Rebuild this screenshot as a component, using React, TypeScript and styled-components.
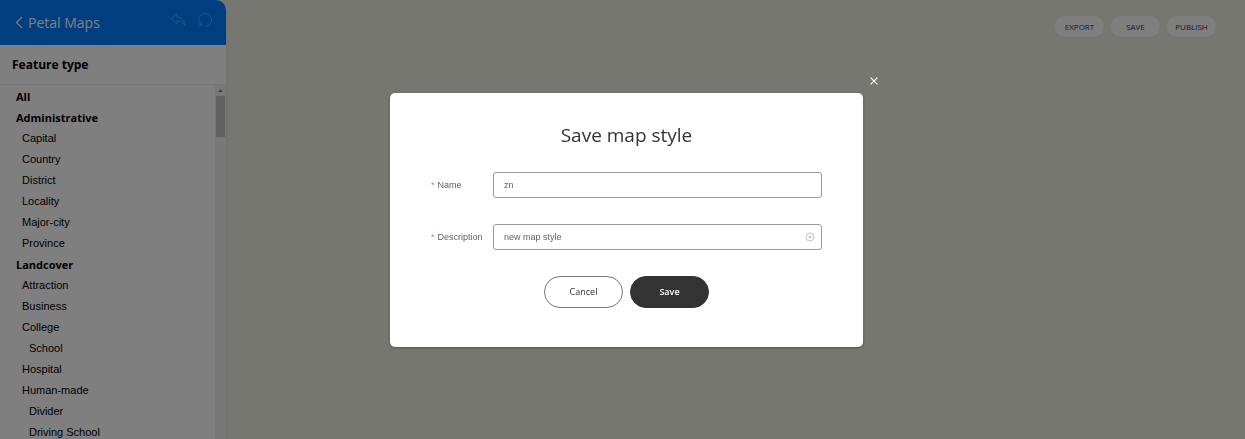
import React, { useState } from "react";
import styled, { createGlobalStyle } from "styled-components";

const ui = `"Open Sans", "Noto Sans", sans-serif`;
const body = `"Liberation Sans", Arial, sans-serif`;

const GlobalStyle = createGlobalStyle`
  *, *::before, *::after { box-sizing: border-box; }
  body { margin: 0; font-family: ${body}; font-size: 12px; color: #000; }
  button, input { font: inherit; }
  button { cursor: pointer; }
  ul { list-style: none; margin: 0; padding: 0; }
`;

const Page = styled.div`
  display: flex;
  height: 100vh;
  overflow: hidden;
  background: #edefe1;
`;

const Sidebar = styled.aside`
  display: flex;
  flex-direction: column;
  width: 226px;
  flex: none;
  background: #fff;
  border-top-right-radius: 10px;
  box-shadow: 1px 0 3px rgba(0, 0, 0, 0.06);
`;

const Brand = styled.header`
  display: flex;
  align-items: center;
  height: 45px;
  flex: none;
  padding: 0 13px 0 14px;
  background: #007dff;
  border-top-right-radius: 10px;
  color: #fff;
`;

const BackLink = styled.a`
  display: flex;
  align-items: center;
  gap: 4px;
  flex: 1;
  color: inherit;
  text-decoration: none;
  font: 14px/20px ${ui};
`;

const HistoryTools = styled.div`
  display: flex;
  gap: 11px;
  padding-bottom: 6px;
`;

const ToolButton = styled.button`
  display: flex;
  padding: 0;
  border: 0;
  background: none;
  color: #5caaff;
`;

const SectionTitle = styled.h2`
  display: flex;
  align-items: center;
  height: 40px;
  flex: none;
  margin: 0;
  padding: 0 12px;
  border-bottom: 1px solid #eee;
  font: 700 12px/20px ${ui};
`;

const ListArea = styled.div`
  display: flex;
  flex: 1;
  min-height: 0;
  overflow: hidden;
`;

const FeatureList = styled.ul`
  flex: 1;
  padding-top: 1px;
`;

const Feature = styled.li<{ $level: number }>`
  height: 21px;
  padding-left: ${(p) => [16, 22, 29][p.$level]}px;
  font: ${(p) => (p.$level === 0 ? `700 11px/21px ${ui}` : `11px/21px ${body}`)};
`;

const ScrollTrack = styled.div`
  display: flex;
  flex-direction: column;
  align-items: center;
  width: 11px;
  background: #f1f1f1;
`;

const ScrollArrow = styled.span`
  height: 11px;
  display: flex;
  align-items: center;
`;

const ScrollThumb = styled.span`
  width: 9px;
  height: 41px;
  background: #c1c1c1;
`;

const MapArea = styled.main`
  flex: 1;
  padding: 16px 29px;
`;

const MapActions = styled.div`
  display: flex;
  justify-content: flex-end;
  gap: 7px;
`;

const MapButton = styled.button`
  width: 49px;
  height: 21px;
  padding: 0;
  border: 0;
  border-radius: 11px;
  background: #fff;
  color: #333;
  font: 8px/21px ${ui};
`;

const Overlay = styled.div`
  position: fixed;
  inset: 0;
  padding: 93px 0 0 8px;
  background: rgba(0, 0, 0, 0.5);
`;

const Dialog = styled.section`
  position: relative;
  width: 90%;
  max-width: 473px;
  margin: 0 auto;
  padding: 28px 41px 39px;
  border-radius: 5px;
  background: #fff;
  box-shadow: 0 1px 3px rgba(0, 0, 0, 0.3);
`;

const CloseButton = styled.button`
  position: absolute;
  top: -17px;
  right: -16px;
  display: flex;
  padding: 0;
  border: 0;
  background: none;
  color: #fff;
`;

const DialogTitle = styled.h1`
  margin: 0 0 23px;
  text-align: center;
  color: #333;
  font: 400 19px/28px ${ui};
`;

const Field = styled.div`
  display: flex;
  align-items: center;
  margin-bottom: 26px;
`;

const Label = styled.label`
  width: 62px;
  flex: none;
  color: #606266;
  font-size: 9px;
`;

const Required = styled.span`
  margin-right: 3px;
  color: #f56c6c;
`;

const InputBox = styled.div`
  display: flex;
  align-items: center;
  flex: 1;
  height: 26px;
  padding: 0 6px 0 10px;
  border: 1px solid #999;
  border-radius: 3px;
`;

const TextInput = styled.input`
  flex: 1;
  min-width: 0;
  padding: 0;
  border: 0;
  outline: 0;
  background: none;
  color: #606266;
  font-size: 9px;
`;

const ClearButton = styled.button`
  display: flex;
  padding: 0;
  border: 0;
  background: none;
  color: #c0c4cc;
`;

const DialogActions = styled.div`
  display: flex;
  justify-content: center;
  gap: 7px;
`;

const PillButton = styled.button<{ $primary?: boolean }>`
  width: 79px;
  height: 32px;
  padding: 0;
  border: 1px solid ${(p) => (p.$primary ? "#333" : "#777")};
  border-radius: 16px;
  background: ${(p) => (p.$primary ? "#333" : "#fff")};
  color: ${(p) => (p.$primary ? "#fff" : "#333")};
  font: ${(p) => (p.$primary ? 600 : 400)} 9px/20px ${ui};
`;

const features: [string, number][] = [
  ["All", 0],
  ["Administrative", 0],
  ["Capital", 1],
  ["Country", 1],
  ["District", 1],
  ["Locality", 1],
  ["Major-city", 1],
  ["Province", 1],
  ["Landcover", 0],
  ["Attraction", 1],
  ["Business", 1],
  ["College", 1],
  ["School", 2],
  ["Hospital", 1],
  ["Human-made", 1],
  ["Divider", 2],
  ["Driving School", 2],
];

export default function App() {
  const [name, setName] = useState("zn");
  const [description, setDescription] = useState("new map style");

  return (
    <Page>
      <GlobalStyle />
      <Sidebar>
        <Brand>
          <BackLink href="#">
            <svg width="10" height="14" viewBox="0 0 10 14" fill="none" stroke="currentColor" strokeWidth="1.2">
              <path d="M8 1 2.500 6.500 8 12" />
            </svg>
            Petal Maps
          </BackLink>
          <HistoryTools>
            <ToolButton aria-label="Undo">
              <svg width="16" height="16" viewBox="0 0 16 16" fill="none" stroke="currentColor" strokeWidth="0.8" strokeLinejoin="round">
                <path d="M7 1.5 1.2 6.8 7 12V8.9c3.6-.2 5.9 1.2 7.7 4.3C14.300 8.300 11.500 5.200 7 4.900Z" />
              </svg>
            </ToolButton>
            <ToolButton aria-label="Reset">
              <svg width="16" height="16" viewBox="0 0 16 16" fill="none" stroke="currentColor" strokeWidth="0.8">
                <path d="M4 13A6.500 6.500 0 1 1 8.500 14.500M1.500 13.300H4.500V10.200" />
              </svg>
            </ToolButton>
          </HistoryTools>
        </Brand>
        <SectionTitle>Feature type</SectionTitle>
        <ListArea>
          <FeatureList>
            {features.map(([label, level]) => (
              <Feature key={label} $level={level}>
                {label}
              </Feature>
            ))}
          </FeatureList>
          <ScrollTrack aria-hidden="true">
            <ScrollArrow>
              <svg width="5" height="3" viewBox="0 0 5 3" fill="#888">
                <path d="M0 3 2.500 0 5 3Z" />
              </svg>
            </ScrollArrow>
            <ScrollThumb />
          </ScrollTrack>
        </ListArea>
      </Sidebar>
      <MapArea>
        <MapActions>
          <MapButton>EXPORT</MapButton>
          <MapButton>SAVE</MapButton>
          <MapButton>PUBLISH</MapButton>
        </MapActions>
      </MapArea>
      <Overlay>
        <Dialog role="dialog" aria-modal="true" aria-labelledby="dialog-title">
          <CloseButton aria-label="Close">
            <svg width="10" height="10" viewBox="0 0 10 10" stroke="currentColor" strokeWidth="1.2">
              <path d="M1.700 1.700 8.300 8.300M8.300 1.700 1.700 8.300" />
            </svg>
          </CloseButton>
          <DialogTitle id="dialog-title">Save map style</DialogTitle>
          <Field>
            <Label htmlFor="style-name">
              <Required>*</Required>Name
            </Label>
            <InputBox>
              <TextInput id="style-name" value={name} onChange={(e) => setName(e.target.value)} />
            </InputBox>
          </Field>
          <Field>
            <Label htmlFor="style-description">
              <Required>*</Required>Description
            </Label>
            <InputBox>
              <TextInput
                id="style-description"
                value={description}
                onChange={(e) => setDescription(e.target.value)}
              />
              <ClearButton aria-label="Clear description" onClick={() => setDescription("")}>
                <svg width="10" height="10" viewBox="0 0 10 10" fill="none" stroke="currentColor" strokeWidth="1">
                  <circle cx="5" cy="5" r="4" />
                  <path d="M3.500 3.500 6.500 6.500M6.500 3.500 3.500 6.500" />
                </svg>
              </ClearButton>
            </InputBox>
          </Field>
          <DialogActions>
            <PillButton>Cancel</PillButton>
            <PillButton $primary>Save</PillButton>
          </DialogActions>
        </Dialog>
      </Overlay>
    </Page>
  );
}
